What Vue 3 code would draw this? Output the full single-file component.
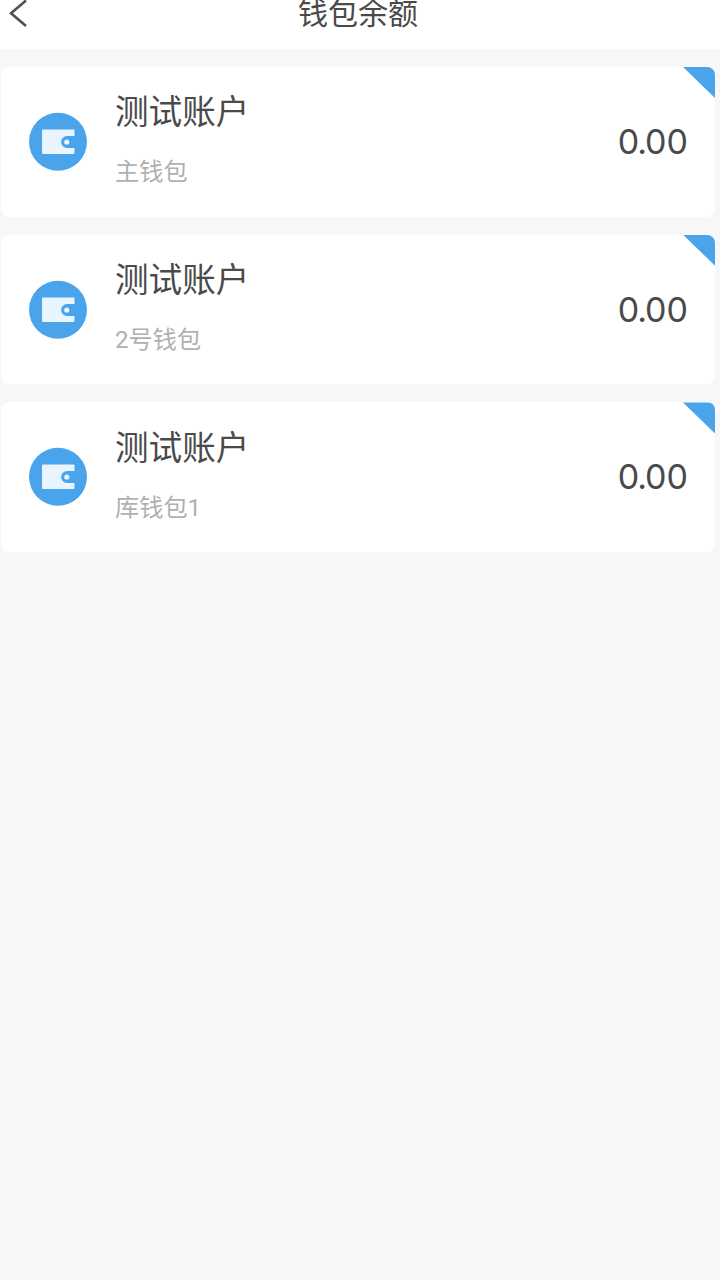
<script setup>
const wallets = [
  { account: '测试账户', name: '主钱包', balance: '0.00' },
  { account: '测试账户', name: '2号钱包', balance: '0.00' },
  { account: '测试账户', name: '库钱包1', balance: '0.00' },
]
const whole = (v) => v.split('.')[0]
const cents = (v) => v.split('.')[1]
</script>

<template>
  <div class="page">
    <header class="bar">
      <svg class="back" width="36" height="30" viewBox="0 0 36 30">
        <path d="M26 0.5 L11 13.2 L26 26" fill="none" stroke="#505050" stroke-width="2.6" />
      </svg>
      <h1 class="title">钱包余额</h1>
      <span class="spacer"></span>
    </header>
    <main class="list">
      <section v-for="w in wallets" :key="w.name" class="card">
        <svg class="icon" width="60" height="60" viewBox="0 0 60 60">
          <circle cx="30" cy="29.8" r="29" fill="#49a4ec" />
          <path
            d="M15 17.5 H45.5 Q46.5 17.5 46.5 18.5 V24.1 H39 A5.9 5.9 0 0 0 39 35.9 H46.5 V41.1 Q46.5 42.1 45.5 42.1 H15 Q14 42.1 14 41.1 V18.5 Q14 17.5 15 17.5 Z"
            fill="#e9f5fe"
          />
          <circle cx="38.8" cy="30" r="2.6" fill="#e9f5fe" />
        </svg>
        <div class="info">
          <div class="account">{{ w.account }}</div>
          <div class="name">{{ w.name }}</div>
        </div>
        <div class="balance">{{ whole(w.balance) }}<span class="dot">.</span>{{ cents(w.balance) }}</div>
        <i class="corner"></i>
      </section>
    </main>
  </div>
</template>

<style>
body {
  background: #f7f7f7;
}
</style>

<style scoped>
.page {
  height: 1280px;
  overflow: hidden;
  background: #f7f7f7;
  font-family: Roboto, 'Noto Sans CJK SC', sans-serif;
  color: #4a4a4a;
}
.bar {
  display: flex;
  justify-content: space-between;
  height: 49px;
  background: #fff;
}
.back,
.spacer {
  width: 36px;
  flex: none;
}
.title {
  margin: -1px 0 0 -4px;
  font-size: 30px;
  line-height: 30px;
  font-weight: 400;
}
.list {
  display: flex;
  flex-direction: column;
  gap: 18px;
  padding: 18px 5px 0 1px;
}
.card {
  position: relative;
  display: flex;
  align-items: center;
  box-sizing: border-box;
  height: 149.7px;
  padding: 0 27px 0 27px;
  border-radius: 8px;
  background: #fff;
  overflow: hidden;
}
.icon {
  flex: none;
}
.info {
  flex: 1;
  padding-left: 27px;
}
.account {
  font-size: 33.6px;
  line-height: 40px;
}
.name {
  margin-top: 23px;
  font-size: 24.2px;
  line-height: 32px;
  padding-bottom: 2px;
  color: #b0b0b0;
}
.balance {
  font-family: Inter, sans-serif;
  font-size: 34px;
  line-height: 40px;
}
.dot {
  margin: 0 -2px;
}
.corner {
  position: absolute;
  top: 0;
  right: 0;
  width: 32px;
  height: 31px;
  background: #49a4ec;
  clip-path: polygon(0 0, 100% 0, 100% 100%);
}
</style>
